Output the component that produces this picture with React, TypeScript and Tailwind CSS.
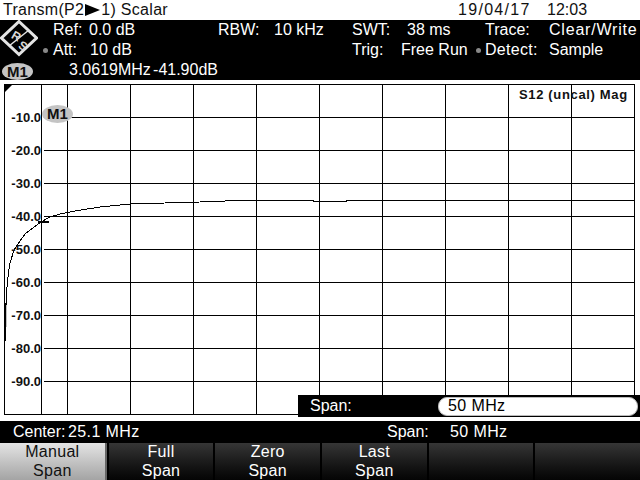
import React from 'react';

const font = { fontFamily: '"Liberation Sans", Arial, sans-serif' };

const gridX = [41, 67, 130, 193, 256, 319, 382, 445, 508, 571];
const gridY = [117, 150, 183, 216, 249, 282, 315, 348, 381];
const levels = [
  { y: 117, label: '-10.0' },
  { y: 150, label: '-20.0' },
  { y: 183, label: '-30.0' },
  { y: 216, label: '-40.0' },
  { y: 249, label: '-50.0' },
  { y: 282, label: '-60.0' },
  { y: 315, label: '-70.0' },
  { y: 348, label: '-80.0' },
  { y: 381, label: '-90.0' },
];

const softkeys = [
  ['Manual', 'Span'],
  ['Full', 'Span'],
  ['Zero', 'Span'],
  ['Last', 'Span'],
  ['', ''],
  ['', ''],
];

const trace =
  '6,341 5.5,327 6,305 7,287 8.5,272 10,263 14,250 20,241 26,233 33,228 41,222 50,217 60,214 75,211 100,207 130,204 165,203 200,202 250,200 313,200 313,201 346,201 346,200 634,200';

function Logo() {
  return (
    <svg width="38" height="38" viewBox="0 0 38 38" className="block">
      <g fill="none" stroke="#e4e4e4">
        <path d="M19 1.5 L36.5 18 L19 34.5 L1.5 18 Z" strokeWidth="3" />
        <path d="M9 26 L29 10" strokeWidth="1.5" />
      </g>
      <text x="12" y="20" fontSize="12" fontWeight="bold" fill="#d8d8d8" transform="rotate(30 16 16)" style={font}>
        R
      </text>
      <text x="19" y="30" fontSize="12" fontWeight="bold" fill="#d8d8d8" transform="rotate(30 23 26)" style={font}>
        S
      </text>
    </svg>
  );
}

function MarkerBadge({ className }: { className?: string }) {
  return (
    <div
      className={`flex w-[31px] items-center justify-center rounded-[50%] bg-[#c4c4c4] text-[15px] font-bold leading-none text-[#111] ${className ?? ''}`}
    >
      M1
    </div>
  );
}

function Plot() {
  return (
    <div className="relative h-[341px] w-[640px] bg-white">
      <svg width="640" height="341" viewBox="0 80 640 341" className="block">
        <g stroke="#000" strokeWidth="1" shapeRendering="crispEdges">
          <rect x="4.5" y="84.5" width="630" height="330" fill="none" />
          {gridX.map((x) => (
            <line key={x} x1={x + 0.5} x2={x + 0.5} y1="84" y2="414" />
          ))}
          {gridY.map((y) => (
            <line key={y} x1="44" x2="634" y1={y + 0.5} y2={y + 0.5} />
          ))}
          <polyline points={trace} fill="none" />
        </g>
        <path d="M5 85 H12 L5 92 Z" fill="#000" />
        <path d="M5.5 303 V327" stroke="#000" strokeWidth="1.5" />
        <path d="M38 222 H49" stroke="#000" strokeWidth="2" />
      </svg>

      {levels.map((l) => (
        <div
          key={l.y}
          className="absolute left-[10px] w-[31px] text-right text-[13px] font-bold leading-[14px] text-[#111]"
          style={{ top: l.y - 80 - 6 }}
        >
          {l.label}
        </div>
      ))}

      <MarkerBadge className="absolute left-[42px] top-[25px] h-[18px] pb-[2px]" />

      <div className="absolute left-[519px] top-[7px] whitespace-nowrap text-[13px] font-bold leading-[15px] tracking-[0.65px] text-[#111]">
        S12 (uncal) Mag
      </div>

      <div className="absolute left-[298px] top-[315px] flex h-[22px] w-[342px] items-center bg-black pl-[12px] text-[16px] text-white">
        <span className="w-[128px]">Span:</span>
        <div className="flex h-[19px] w-[200px] items-center rounded-[9px] border border-[#bbb] bg-white pl-[9px] tracking-[0.4px] text-black">
          50 MHz
        </div>
      </div>
    </div>
  );
}

export default function App() {
  return (
    <div className="flex h-[480px] w-[640px] flex-col overflow-hidden bg-black" style={font}>
      <div className="flex h-[20px] items-center bg-white pl-[3px] text-[16px] leading-none tracking-[0.3px] text-[#111]">
        <span className="flex w-[455px] items-center">
          Transm(P2
          <svg width="15" height="12" viewBox="0 0 15 12" className="mx-[1px]">
            <path d="M0 0 L15 6 L0 12 Z" fill="#000" />
          </svg>
          1) Scalar
        </span>
        <span className="w-[89px] tracking-[1.3px]">19/04/17</span>
        <span className="tracking-normal">12:03</span>
      </div>

      <div className="relative flex h-[60px] whitespace-nowrap bg-black text-[16px] leading-[20px] text-white">
        <div className="w-[53px]">
          <Logo />
        </div>
        <div className="w-[165px]">
          <div className="flex">
            <span className="w-[36px]">Ref:</span>
            <span>0.0 dB</span>
          </div>
          <div className="flex">
            <span className="w-[37px]">Att:</span>
            <span>10 dB</span>
          </div>
          <div className="flex pl-[16px]">
            <span className="w-[52px]">3.0619</span>
            <span className="w-[47px]">MHz</span>
            <span className="w-[48px]">-41.90</span>
            <span>dB</span>
          </div>
        </div>
        <div className="flex w-[134px]">
          <span className="w-[56px]">RBW:</span>
          <span>10 kHz</span>
        </div>
        <div className="w-[133px]">
          <div className="flex">
            <span className="w-[55px]">SWT:</span>
            <span>38 ms</span>
          </div>
          <div className="flex">
            <span className="w-[49px]">Trig:</span>
            <span>Free Run</span>
          </div>
        </div>
        <div>
          <div className="flex">
            <span className="w-[64px]">Trace:</span>
            <span className="tracking-[0.8px]">Clear/Write</span>
          </div>
          <div className="flex">
            <span className="w-[64px] tracking-[0.3px]">Detect:</span>
            <span>Sample</span>
          </div>
        </div>
        <div className="absolute left-[43px] top-[28px] size-[5px] rounded-full bg-[#888]" />
        <div className="absolute left-[476px] top-[28px] size-[5px] rounded-full bg-[#888]" />
        <MarkerBadge className="absolute left-[2px] top-[43px] h-[17px]" />
      </div>

      <Plot />

      <div className="flex h-[22px] items-center bg-black pl-[13px] text-[16px] text-white">
        <span className="w-[55px]">Center:</span>
        <span className="w-[319px] tracking-[0.4px]">25.1 MHz</span>
        <span className="w-[63px]">Span:</span>
        <span className="tracking-[0.4px]">50 MHz</span>
      </div>

      <div className="flex h-[37px] gap-[2px] bg-black">
        {softkeys.map((k, i) => (
          <div
            key={i}
            className={`flex flex-1 flex-col items-center justify-center pb-[2px] text-[16px] leading-[19px] tracking-[0.3px] ${
              i === 0
                ? 'border-r-2 border-[#666] bg-gradient-to-b from-[#e4e4e4] to-[#a4a4a4] text-[#111]'
                : 'bg-gradient-to-b from-[#363636] to-[#050505] text-white'
            }`}
          >
            <span>{k[0]}</span>
            <span>{k[1]}</span>
          </div>
        ))}
      </div>
    </div>
  );
}
